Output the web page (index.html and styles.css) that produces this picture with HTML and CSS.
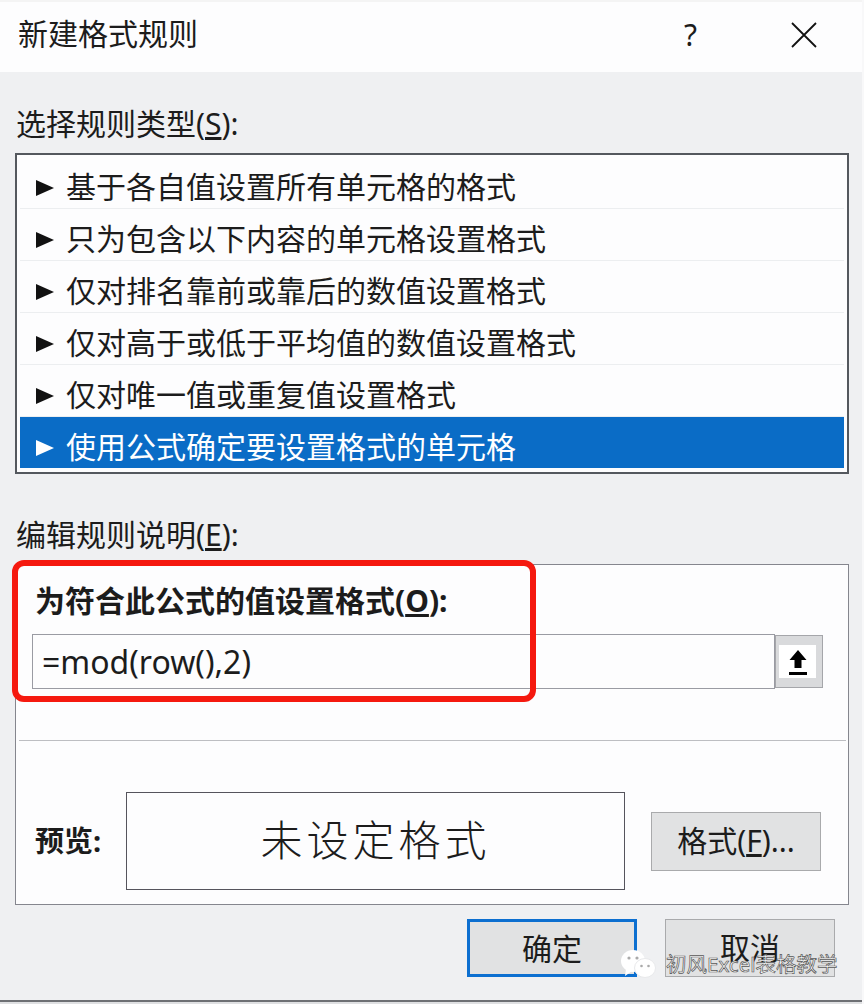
FILE: index.html
```html
<!DOCTYPE html>
<html lang="zh">
<head>
  <meta charset="utf-8">
  <title>新建格式规则</title>
  <link rel="stylesheet" href="styles.css">
</head>
<body>
  <div class="dialog">
    <div class="titlebar">
      <span class="title">新建格式规则</span>
      <span class="help">?</span>
      <svg class="close" width="26" height="26" viewBox="0 0 26 26">
        <path d="M1 1L25 25M25 1L1 25" stroke="#111" stroke-width="1.8" fill="none"/>
      </svg>
    </div>

    <div class="section-label first">选择规则类型(<u>S</u>):</div>
    <ul class="rule-list">
      <li><i class="arrow"></i>基于各自值设置所有单元格的格式</li>
      <li><i class="arrow"></i>只为包含以下内容的单元格设置格式</li>
      <li><i class="arrow"></i>仅对排名靠前或靠后的数值设置格式</li>
      <li><i class="arrow"></i>仅对高于或低于平均值的数值设置格式</li>
      <li><i class="arrow"></i>仅对唯一值或重复值设置格式</li>
      <li class="selected"><i class="arrow"></i>使用公式确定要设置格式的单元格</li>
    </ul>

    <div class="section-label second">编辑规则说明(<u>E</u>):</div>
    <div class="group">
      <div class="formula-label">为符合此公式的值设置格式(<u>O</u>):</div>
      <div class="formula-row">
        <div class="formula-input">=mod(row(),2)</div>
        <div class="picker">
          <div class="picker-face">
            <svg width="20" height="26" viewBox="0 0 20 26">
              <path d="M10 1L18.500 11H13.500V19H6.500V11H1.500Z" fill="#000"/>
              <rect x="1" y="23" width="18" height="3" fill="#000"/>
            </svg>
          </div>
        </div>
      </div>
      <div class="divider"></div>
      <div class="preview-row">
        <span class="preview-label">预览:</span>
        <div class="preview-box">未设定格式</div>
        <button class="btn format-btn">格式(<u>F</u>)...</button>
      </div>
    </div>

    <div class="actions">
      <button class="btn ok-btn">确定</button>
      <button class="btn">取消</button>
    </div>
    <div class="bottom-line"></div>

    <!-- annotation and watermark sit on top of the dialog -->
    <div class="red-box"></div>
    <div class="watermark">
      <svg width="36" height="30" viewBox="0 0 36 30">
        <ellipse cx="13" cy="12" rx="12" ry="11" fill="#fff"/>
        <path d="M6 20L5 27L12 22Z" fill="#fff"/>
        <ellipse cx="25" cy="19" rx="10.500" ry="9.500" fill="#fff" stroke="#e8e9eb" stroke-width="1"/>
        <circle cx="9" cy="9" r="1.600" fill="#aaa"/>
        <circle cx="17" cy="9" r="1.600" fill="#aaa"/>
        <circle cx="21.500" cy="17" r="1.300" fill="#aaa"/>
        <circle cx="28.500" cy="17" r="1.300" fill="#aaa"/>
      </svg>
      <span class="mark-text">初风Excel表格教学</span>
    </div>
  </div>
</body>
</html>
```

FILE: styles.css
```css
* {
  box-sizing: border-box;
}

body {
  margin: 0;
  background-color: #eff0f2;
  color: #1c1c1c;
  font-family: "Noto Sans", "Noto Sans CJK SC", sans-serif;
  font-size: 30px;
}

.dialog {
  position: relative;
  width: 864px;
  height: 1004px;
  overflow: hidden;
  border-right: 2px solid #f8f8f9;
}

.titlebar {
  display: flex;
  align-items: center;
  height: 72px;
  padding-left: 18px;
  padding-bottom: 5px;
  background-color: #fdfdfe;
  border-top: 2px solid #f4f4f4;
}

.title {
  flex: 1;
  margin-bottom: 5px;
  font-size: 30px;
}

.help {
  width: 20px;
  margin-right: 87px;
  font-size: 30px;
}

.close {
  margin-right: 45px;
}

.section-label {
  height: 30px;
  padding-left: 16px;
  line-height: 30px;
}

.section-label.first {
  margin: 37px 0 14px;
}

.section-label.second {
  margin: 46px 0 14px;
}

.rule-list {
  list-style: none;
  height: 321px;
  margin: 0 13px 0 15px;
  padding: 2px 3px;
  background-color: #fdfdfe;
  border: 2px solid #54585e;
}

.rule-list li {
  display: flex;
  align-items: center;
  height: 52px;
  padding-left: 16px;
  padding-top: 4px;
  border-bottom: 1px solid #eceef0;
}

.rule-list li.selected {
  height: 51px;
  background-color: #0a6cc6;
  border-bottom: 0;
  color: #fff;
}

.arrow {
  width: 0;
  height: 0;
  margin-top: 6px;
  margin-right: 12px;
  border-left: 18px solid #111;
  border-top: 8px solid transparent;
  border-bottom: 8px solid transparent;
}

.selected .arrow {
  border-left-color: #fff;
}

.group {
  height: 341px;
  margin: 0 13px 0 15px;
  padding: 20px 0 0 16px;
  background-color: #fdfdfe;
  border: 1px solid #85868e;
}

.formula-label {
  height: 32px;
  margin-left: 3px;
  font-weight: 700;
  line-height: 32px;
}

.formula-row {
  display: flex;
  height: 55px;
  margin-top: 17px;
}

.formula-input {
  width: 743px;
  padding-left: 9px;
  border: 1px solid #9a9ba3;
  font-size: 32px;
  line-height: 54px;
}

.picker {
  width: 48px;
  height: 53px;
  margin-top: 1px;
  padding: 9px 6px 9px 3px;
  background-color: #d9dadc;
  border: 1px solid #a5a6aa;
}

.picker-face {
  display: flex;
  align-items: center;
  justify-content: center;
  height: 33px;
  background-color: #fff;
}

.divider {
  height: 1px;
  margin: 51px 2px 0 -13px;
  background-color: #bdbec2;
}

.preview-row {
  display: flex;
  align-items: center;
  height: 98px;
  margin-top: 51px;
}

.preview-label {
  width: 91px;
  margin-left: 3px;
  padding-bottom: 4px;
  font-size: 29px;
  font-weight: 700;
}

.preview-box {
  width: 499px;
  height: 98px;
  border: 1px solid #55545c;
  font-size: 42px;
  font-weight: 300;
  letter-spacing: 4px;
  line-height: 94px;
  text-align: center;
}

.btn {
  width: 170px;
  height: 58px;
  padding: 0;
  background-color: #e1e2e3;
  border: 1px solid #a9aaac;
  color: #1c1c1c;
  font-family: inherit;
  font-size: 30px;
  line-height: 54px;
}

.format-btn {
  margin-left: 26px;
  height: 59px;
}

.actions {
  display: flex;
  justify-content: flex-end;
  gap: 28px;
  margin-top: 14px;
  padding-right: 27px;
}

.ok-btn {
  border: 3px solid #0c6fd0;
}

.bottom-line {
  height: 4px;
  margin-top: 23px;
  background-color: #dfe0e2;
  border-top: 2px solid #6e7074;
}

.red-box {
  position: absolute;
  left: 12px;
  top: 560px;
  width: 524px;
  height: 142px;
  border: 6px solid #f5190f;
  border-radius: 12px;
}

.watermark {
  position: absolute;
  left: 620px;
  top: 949px;
  display: flex;
  align-items: center;
  gap: 10px;
}

.mark-text {
  color: #fff;
  font-size: 20.500px;
  line-height: 30px;
  -webkit-text-stroke: 0.7px #555;
}
```
